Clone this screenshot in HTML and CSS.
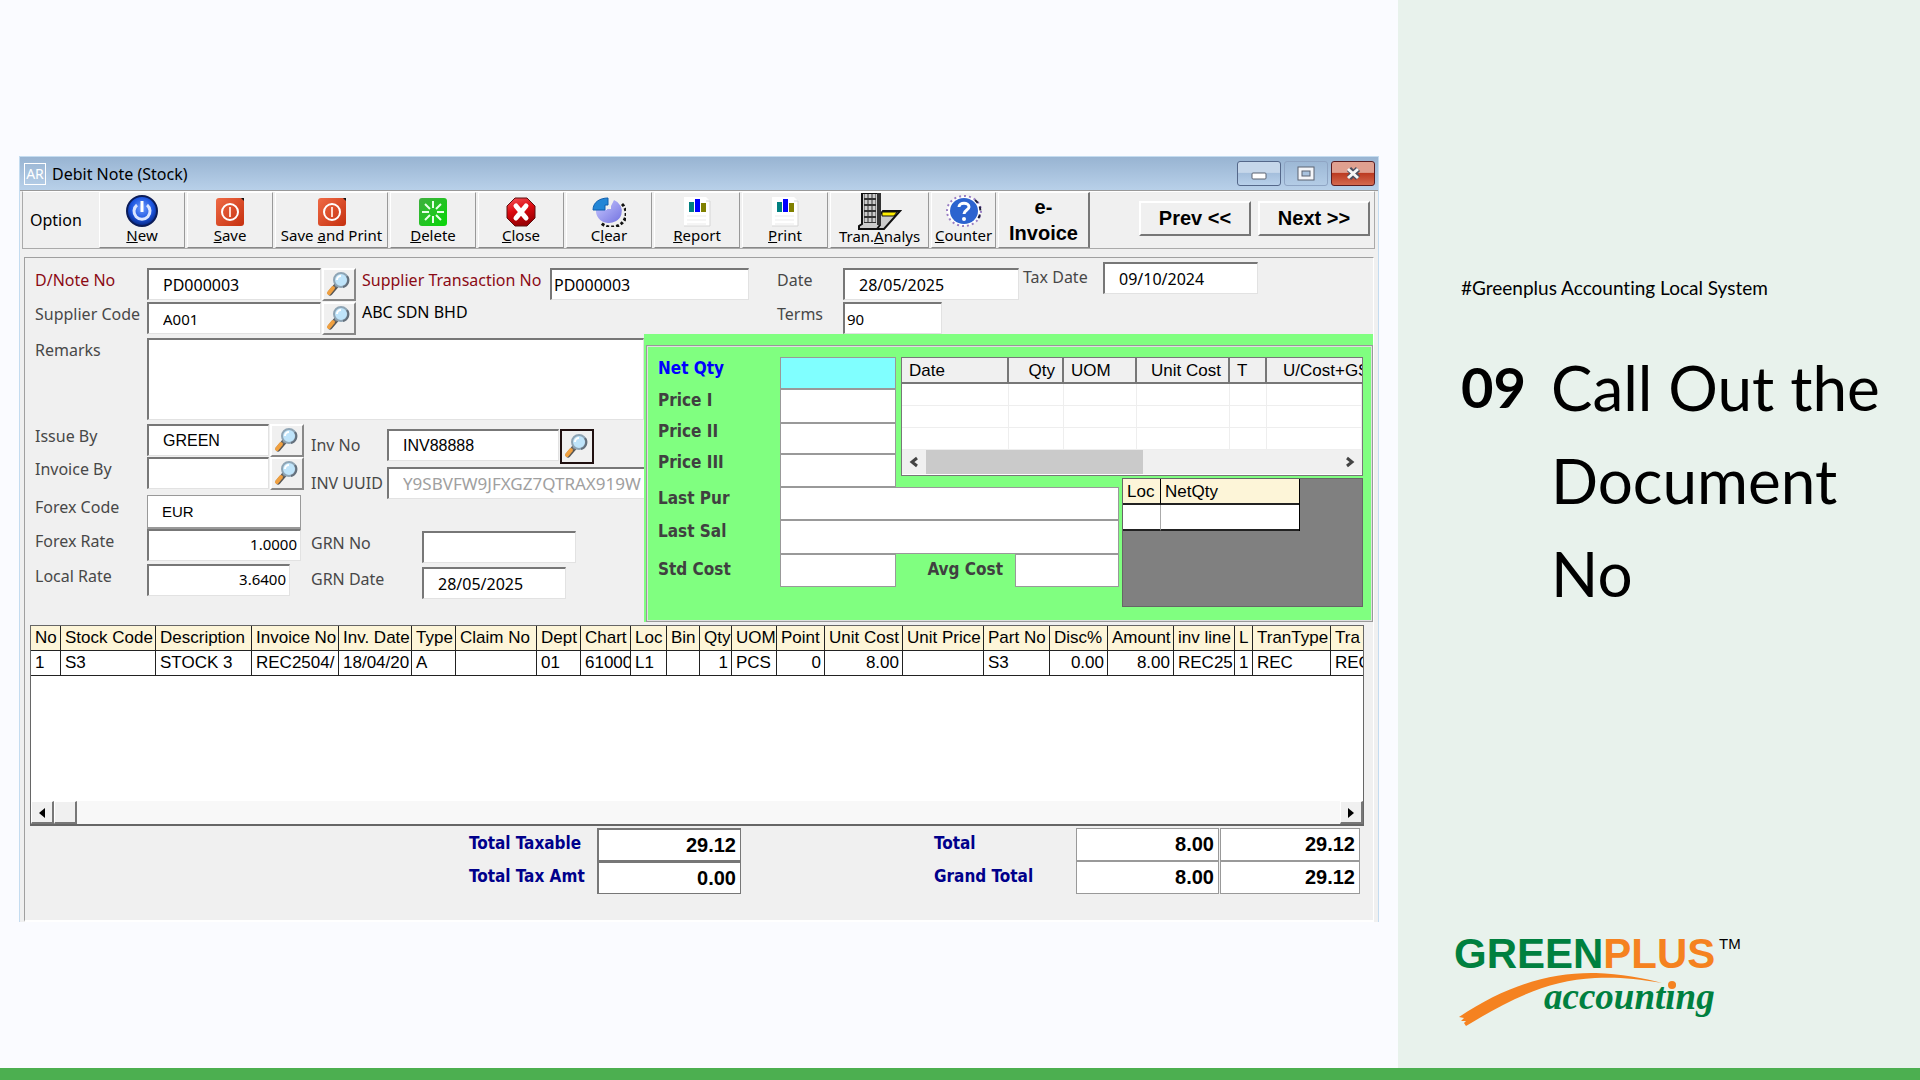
FILE: index.html
```html
<!DOCTYPE html>
<html lang="en">
  <head>
    <meta charset="UTF-8" />
    <meta name="viewport" content="width=device-width, initial-scale=1.0" />
    <title>Call Out the Document No</title>
    <link rel="stylesheet" href="styles.css">
  </head>
  <body>
    <!-- Shared icons -->
    <svg class="defs" width="0" height="0">
      <defs>
        <linearGradient id="redSquare" x1="0" y1="0" x2="1" y2="1">
          <stop offset="0" stop-color="#ef6a45" />
          <stop offset="1" stop-color="#c5300f" />
        </linearGradient>
        <radialGradient id="blueBall" cx="0.5" cy="0.4" r="0.6">
          <stop offset="0" stop-color="#6f9cff" />
          <stop offset="0.6" stop-color="#1d56e0" />
          <stop offset="1" stop-color="#06257f" />
        </radialGradient>
        <linearGradient id="redBall" x1="0" y1="0" x2="0.3" y2="1">
          <stop offset="0" stop-color="#f4555a" />
          <stop offset="0.5" stop-color="#dc0a10" />
          <stop offset="1" stop-color="#9c0004" />
        </linearGradient>
        <linearGradient id="greenSquare" x1="0" y1="0" x2="1" y2="1">
          <stop offset="0" stop-color="#3fae3f" />
          <stop offset="1" stop-color="#08d808" />
        </linearGradient>
        <linearGradient id="pie" x1="0" y1="0" x2="1" y2="1">
          <stop offset="0" stop-color="#c9c9ff" />
          <stop offset="1" stop-color="#7272e0" />
        </linearGradient>
        <symbol id="search" viewBox="0 0 28 28">
          <path d="M6 22 L12 15" stroke="#555" stroke-width="5" stroke-linecap="round" />
          <path d="M5 22 L9 17" stroke="#f0a040" stroke-width="4" stroke-linecap="round" />
          <path d="M11 16 L14 13" stroke="#777" stroke-width="3" />
          <circle cx="17" cy="9" r="7" fill="#bfe4fa" stroke="#8fa5b5" stroke-width="2" />
          <path d="M13 9 a4 4 0 0 1 4 -4" stroke="#fff" stroke-width="2" fill="none" />
          <path d="M23 5 a7 7 0 0 1 -4 11" stroke="#64707c" stroke-width="2" fill="none" />
        </symbol>
        <symbol id="save" viewBox="0 0 30 30">
          <rect x="1" y="1" width="28" height="28" rx="3" fill="url(#redSquare)" />
          <path d="M26 1 h3 v3z" fill="#111" />
          <circle cx="15" cy="15" r="8" fill="none" stroke="#fff" stroke-width="2" />
          <path d="M15 10 v10" stroke="#ffd9cc" stroke-width="2" />
        </symbol>
        <symbol id="report" viewBox="0 0 30 30">
          <path d="M2 0 H24 L28 4 V29 H2z" fill="#fff" />
          <path d="M24 4 h4 v25 H2" fill="none" stroke="#d5d5d5" />
          <path d="M5 19 h19 M5 23 h19 M5 27 h19" stroke="#ebebeb" />
          <rect x="7" y="5" width="5" height="10" fill="#008080" />
          <rect x="13" y="2" width="5" height="13" fill="#0000ff" />
          <rect x="19" y="6" width="5" height="9" fill="#808000" />
        </symbol>
      </defs>
    </svg>

    <div class="slide">
      <main class="stage">
        <section class="window">
          <header class="titlebar">
            <span class="app-icon">AR</span>
            <span class="window-title">Debit Note (Stock)</span>
            <button type="button" class="win-btn" aria-label="Minimize">
              <svg width="44" height="24"><rect x="14" y="11" width="14" height="6" rx="1" fill="#fff" stroke="#5b6270" /></svg>
            </button>
            <button type="button" class="win-btn faded" aria-label="Maximize">
              <svg width="44" height="24"><rect x="15" y="7" width="12" height="9" fill="none" stroke="#5b6270" stroke-width="5" /><rect x="15" y="7" width="12" height="9" fill="none" stroke="#f4f6fa" stroke-width="3" /></svg>
            </button>
            <button type="button" class="win-btn close" aria-label="Close window">
              <svg width="44" height="24"><path d="M17 7 l9 9 M26 7 l-9 9" stroke="#4b4f60" stroke-width="6" /><path d="M16 7 l10 9 M26 7 l-10 9" stroke="#f5f5f5" stroke-width="3" /></svg>
            </button>
          </header>

          <nav class="toolbar">
            <span class="option">Option</span>
            <button type="button" class="tool">
              <svg width="32" height="32" viewBox="0 0 32 32"><circle cx="16" cy="16" r="15" fill="url(#blueBall)" stroke="#0b1c58" stroke-width="2" /><path d="M11 10 a8 8 0 1 0 10 0" fill="none" stroke="#dbe6ff" stroke-width="3" /><path d="M16 6 v11" stroke="#fff" stroke-width="3" /></svg>
              <span><u>N</u>ew</span>
            </button>
            <button type="button" class="tool">
              <svg width="30" height="30"><use href="#save" /></svg>
              <span><u>S</u>ave</span>
            </button>
            <button type="button" class="tool wide">
              <svg width="30" height="30"><use href="#save" /></svg>
              <span>Save <u>a</u>nd Print</span>
            </button>
            <button type="button" class="tool">
              <svg width="30" height="30" viewBox="0 0 30 30"><rect x="1" y="1" width="28" height="28" rx="3" fill="url(#greenSquare)" /><path d="M15 4 v7 M15 19 v7 M4 15 h7 M19 15 h7 M7 7 l5 5 M18 18 l5 5 M23 7 l-5 5 M12 18 l-5 5" stroke="#e8ffe8" stroke-width="2" /></svg>
              <span><u>D</u>elete</span>
            </button>
            <button type="button" class="tool">
              <svg width="30" height="30" viewBox="0 0 30 30"><path d="M9 1 h12 l8 8 v12 l-8 8 H9 l-8 -8 V9z" fill="url(#redBall)" stroke="#5c1010" /><path d="M10 9 l10 12 M20 9 L10 21" stroke="#fff" stroke-width="5" stroke-linecap="round" /></svg>
              <span><u>C</u>lose</span>
            </button>
            <button type="button" class="tool">
              <svg width="34" height="30" viewBox="0 0 34 30"><path d="M30 7 a14 13 0 0 1 -21 19" fill="none" stroke="#111" stroke-width="3" stroke-dasharray="3 2" /><path d="M19 12 V9 L22 3 A13 12 0 1 1 4 13 H15 V12z" fill="url(#pie)" /><path d="M1 13 C1 5 8 1 16 1 V8 H13 V13z" fill="#2386d6" stroke="#0f5fae" /></svg>
              <span>C<u>l</u>ear</span>
            </button>
            <button type="button" class="tool">
              <svg width="30" height="30"><use href="#report" /></svg>
              <span><u>R</u>eport</span>
            </button>
            <button type="button" class="tool">
              <svg width="30" height="30"><use href="#report" /></svg>
              <span><u>P</u>rint</span>
            </button>
            <button type="button" class="tool analys">
              <svg width="44" height="38" viewBox="0 0 44 38"><path d="M25 18 H42 L26 36 H10z" fill="#ccc" stroke="#111" stroke-width="2" /><path d="M24 19 h15 l-3 4 H24z" fill="#ffee00" stroke="#111" /><path d="M4 0 h18 v32 L19 36 H1 v-3 l3 -2z" fill="#ccc" stroke="#111" stroke-width="2" /><path d="M6 1 h12 v29 H6z" fill="#333" /><path d="M8 1 v28 M12 1 v28 M16 1 v28" stroke="#ccc" stroke-width="3" stroke-dasharray="4 2" /><path d="M21 0 v32" stroke="#333" stroke-width="4" /></svg>
              <span>Tran.<u>A</u>nalys</span>
            </button>
            <button type="button" class="tool narrow">
              <svg width="38" height="32" viewBox="0 0 38 32"><ellipse cx="19" cy="16" rx="17" ry="15" fill="#fff" stroke="#9a7fc4" stroke-width="2" stroke-dasharray="2 3" /><path d="M30 5 A17 15 0 0 1 31 26" fill="none" stroke="#1c1c3a" stroke-width="2" stroke-dasharray="4 4" /><ellipse cx="19" cy="16" rx="14" ry="13" fill="#2c63cf" /><path d="M14 12 C14 7 24 7 24 12 C24 15 19 15 19 19" fill="none" stroke="#fff" stroke-width="3" /><circle cx="19" cy="24" r="2" fill="#fff" /></svg>
              <span><u>C</u>ounter</span>
            </button>
            <button type="button" class="tool einvoice">e-<br>Invoice</button>
            <div class="pager">
              <button type="button" class="page-btn">Prev &lt;&lt;</button>
              <button type="button" class="page-btn">Next &gt;&gt;</button>
            </div>
          </nav>

          <form class="panel">
            <div class="head">
              <div class="doc-keys">
                <label for="dnote" class="red">D/Note No</label>
                <input type="text" id="dnote" class="pad" value="PD000003">
                <button type="button" class="find" aria-label="Find debit note"><svg width="28" height="28"><use href="#search" /></svg></button>
                <label for="supplier">Supplier Code</label>
                <input type="text" id="supplier" class="pad small" value="A001">
                <button type="button" class="find" aria-label="Find supplier"><svg width="28" height="28"><use href="#search" /></svg></button>
              </div>
              <div class="doc-supplier">
                <label for="transNo" class="red">Supplier Transaction No</label>
                <input type="text" id="transNo" value="PD000003">
                <span class="supplier-name">ABC SDN BHD</span>
              </div>
              <div class="doc-dates">
                <label for="date">Date</label>
                <input type="text" id="date" class="pad" value="28/05/2025">
                <label for="terms">Terms</label>
                <input type="text" id="terms" class="short small" value="90">
              </div>
              <div class="doc-tax">
                <label for="taxDate">Tax Date</label>
                <input type="text" id="taxDate" class="pad" value="09/10/2024">
              </div>
            </div>

            <div class="body">
              <div class="details">
                <div class="remarks">
                  <label for="remarks">Remarks</label>
                  <textarea id="remarks"></textarea>
                </div>
                <div class="columns">
                  <div class="left-fields">
                    <label for="issueBy">Issue By</label>
                    <input type="text" id="issueBy" class="pad arial" value="GREEN">
                    <button type="button" class="find" aria-label="Find issuer"><svg width="28" height="28"><use href="#search" /></svg></button>
                    <label for="invoiceBy">Invoice By</label>
                    <input type="text" id="invoiceBy">
                    <button type="button" class="find" aria-label="Find invoicer"><svg width="28" height="28"><use href="#search" /></svg></button>
                    <label for="forexCode">Forex Code</label>
                    <input type="text" id="forexCode" class="pad span flat small arial" value="EUR">
                    <label for="forexRate">Forex Rate</label>
                    <input type="text" id="forexRate" class="span num" value="1.0000">
                    <label for="localRate">Local Rate</label>
                    <input type="text" id="localRate" class="span num rate" value="3.6400">
                  </div>
                  <div class="right-fields">
                    <div class="inv-row">
                      <label for="invNo">Inv No</label>
                      <input type="text" id="invNo" class="pad arial" value="INV88888">
                      <button type="button" class="find focused" aria-label="Find invoice"><svg width="28" height="28"><use href="#search" /></svg></button>
                    </div>
                    <div class="inv-row">
                      <label for="invUuid">INV UUID</label>
                      <input type="text" id="invUuid" class="pad uuid" value="Y9SBVFW9JFXGZ7QTRAX919W">
                    </div>
                    <div class="grn-row">
                      <label for="grnNo">GRN No</label>
                      <input type="text" id="grnNo">
                    </div>
                    <div class="grn-row">
                      <label for="grnDate">GRN Date</label>
                      <input type="text" id="grnDate" class="pad grn-date" value="28/05/2025">
                    </div>
                  </div>
                </div>
              </div>

              <div class="stock">
                <div class="stock-box">
                  <label for="netQty" class="blue">Net Qty</label>
                  <input type="text" id="netQty" class="price cyan">
                  <label for="price1">Price I</label>
                  <input type="text" id="price1" class="price">
                  <label for="price2" class="tight">Price II</label>
                  <input type="text" id="price2" class="price">
                  <label for="price3" class="tall tight">Price III</label>
                  <input type="text" id="price3" class="price tall">
                  <label for="lastPur">Last Pur</label>
                  <input type="text" id="lastPur" class="last">
                  <label for="lastSal">Last Sal</label>
                  <input type="text" id="lastSal" class="last">
                  <label for="stdCost" class="cost-label">Std Cost</label>
                  <input type="text" id="stdCost" class="price cost">
                  <label for="avgCost" class="avg-label cost-label">Avg Cost</label>
                  <input type="text" id="avgCost" class="avg cost">

                  <div class="history">
                    <table>
                      <thead>
                        <tr><th>Date</th><th class="r">Qty</th><th>UOM</th><th class="r">Unit Cost</th><th>T</th><th class="r">U/Cost+GST</th></tr>
                      </thead>
                      <tbody>
                        <tr><td></td><td></td><td></td><td></td><td></td><td></td></tr>
                        <tr><td></td><td></td><td></td><td></td><td></td><td></td></tr>
                        <tr><td></td><td></td><td></td><td></td><td></td><td></td></tr>
                      </tbody>
                    </table>
                    <div class="scroll">
                      <button type="button" aria-label="Scroll left"><svg width="10" height="12"><path d="M8 2 L3 6 L8 10" fill="none" stroke="#444" stroke-width="3" /></svg></button>
                      <div class="thumb"></div>
                      <button type="button" aria-label="Scroll right"><svg width="10" height="12"><path d="M2 2 L7 6 L2 10" fill="none" stroke="#444" stroke-width="3" /></svg></button>
                    </div>
                  </div>

                  <div class="locations">
                    <table>
                      <thead><tr><th>Loc</th><th>NetQty</th></tr></thead>
                      <tbody><tr><td></td><td></td></tr></tbody>
                    </table>
                  </div>
                </div>
              </div>
            </div>

            <div class="lines">
              <table>
                <colgroup>
                  <col><col><col><col><col><col><col><col><col><col><col><col>
                  <col><col><col><col><col><col><col><col><col><col><col>
                </colgroup>
                <thead>
                  <tr>
                    <th>No</th><th>Stock Code</th><th>Description</th><th>Invoice No</th><th>Inv. Date</th>
                    <th>Type</th><th>Claim No</th><th>Dept</th><th>Chart</th><th>Loc</th><th>Bin</th><th>Qty</th>
                    <th>UOM</th><th>Point</th><th>Unit Cost</th><th>Unit Price</th><th>Part No</th><th>Disc%</th>
                    <th>Amount</th><th>inv line</th><th>L</th><th>TranType</th><th>Tra</th>
                  </tr>
                </thead>
                <tbody>
                  <tr>
                    <td>1</td><td>S3</td><td>STOCK 3</td><td>REC2504/</td><td>18/04/20</td>
                    <td>A</td><td></td><td>01</td><td>61000</td><td>L1</td><td></td><td class="r">1</td>
                    <td>PCS</td><td class="r">0</td><td class="r">8.00</td><td></td><td>S3</td><td class="r">0.00</td>
                    <td class="r">8.00</td><td>REC25</td><td>1</td><td>REC</td><td>REC</td>
                  </tr>
                </tbody>
              </table>
              <div class="classic-scroll">
                <button type="button" aria-label="Scroll left"><svg width="8" height="12"><path d="M7 1 V11 L1 6z" /></svg></button>
                <div class="classic-thumb"></div>
                <button type="button" class="end" aria-label="Scroll right"><svg width="8" height="12"><path d="M1 1 V11 L7 6z" /></svg></button>
              </div>
            </div>

            <div class="totals">
              <div class="tax-totals">
                <label for="taxable">Total Taxable</label>
                <input type="text" id="taxable" value="29.12">
                <label for="taxAmt">Total Tax Amt</label>
                <input type="text" id="taxAmt" value="0.00">
              </div>
              <div class="grand-totals">
                <label for="total">Total</label>
                <input type="text" id="total" value="8.00">
                <input type="text" aria-label="Total local" value="29.12">
                <label for="grand">Grand Total</label>
                <input type="text" id="grand" value="8.00">
                <input type="text" aria-label="Grand total local" value="29.12">
              </div>
            </div>
          </form>
        </section>
      </main>

      <aside class="caption">
        <p class="tag">#Greenplus Accounting Local System</p>
        <div class="step">
          <span class="step-no">09</span>
          <h1>Call Out the Document No</h1>
        </div>
        <svg class="logo" width="300" height="100" viewBox="0 0 300 100">
          <text x="4" y="38" class="logo-name"><tspan fill="#00803f">GREEN</tspan><tspan fill="#f58220">PLUS</tspan></text>
          <text x="269" y="19" class="logo-tm">TM</text>
          <path d="M9 87 C55 56 100 42 146 43 C170 44 195 48 212 53 C185 48 165 47 145 48 C100 50 62 68 16 96 L14 93 L16 91 L11 91 L14 88z" fill="#f58220" />
          <text x="94" y="79" class="logo-sub">accounting</text>
          <circle cx="222" cy="55" r="4" fill="#f58220" />
        </svg>
      </aside>
    </div>
    <footer class="strip"></footer>
  </body>
</html>
```
FILE: styles.css
```css
* {
  box-sizing: border-box;
}

body {
  margin: 0;
  min-height: 100vh;
  display: flex;
  flex-direction: column;
  background: #fafbff;
  font-family: "Noto Sans", sans-serif;
  font-size: 16px;
  color: #000;
}

.defs {
  position: absolute;
}

.slide {
  flex: 1;
  display: grid;
  grid-template-columns: minmax(0, 1fr) 522px;
}

.strip {
  height: 12px;
  background: #4caf50;
}

.stage {
  padding: 156px 19px 0;
}

button,
input,
textarea {
  font-family: inherit;
  font-size: inherit;
  color: inherit;
  margin: 0;
  padding: 0;
  border-radius: 0;
}

/* Window frame */
.window {
  background: #f0f0f0;
  border: 1px solid #c4dcf0;
  border-bottom: none;
}

.titlebar {
  height: 34px;
  display: flex;
  align-items: center;
  gap: 3px;
  padding: 0 3px 0 4px;
  background: linear-gradient(#98b4d2, #b8d0e9);
  border-bottom: 1px solid #999;
}

.app-icon {
  width: 22px;
  height: 22px;
  border: 1px solid #fff;
  color: #fff;
  font-size: 14px;
  line-height: 20px;
  text-align: center;
}

.window-title {
  flex: 1;
  padding-left: 3px;
}

.win-btn {
  width: 44px;
  height: 25px;
  border: 1px solid #55688a;
  border-radius: 3px;
  background: linear-gradient(#c6d7ea 45%, #a5bfdc 50%, #b8d0ea);
}

.win-btn svg {
  display: block;
}

.win-btn.faded {
  border-color: #8fa5c4;
  background: none;
}

.win-btn.close {
  border-color: #5a1c20;
  background: linear-gradient(#e0a090 45%, #bc3b22 50%, #d4694e);
}

/* Toolbar */
.toolbar {
  height: 58px;
  margin: 0 3px 0 2px;
  display: flex;
  gap: 2px;
  border: 1px solid #aaa;
  border-top-color: #fff;
}

.option {
  width: 74px;
  padding-left: 7px;
  line-height: 56px;
}

.tool {
  width: 86px;
  display: flex;
  flex-direction: column;
  align-items: center;
  justify-content: flex-end;
  border: 1px solid;
  border-color: #fff #999 #888 #fff;
  background: #f0f0f0;
  font-size: 15px;
  line-height: 18px;
  white-space: nowrap;
}

.tool svg {
  flex: none;
  margin-bottom: -3px;
}

.tool span {
  height: 23px;
  line-height: 22px;
}

.tool.wide {
  width: 113px;
}

.tool.analys {
  width: 99px;
}

.tool.analys svg {
  margin-bottom: -6px;
}

.tool.narrow {
  width: 65px;
}

.tool.einvoice {
  width: 92px;
  display: block;
  border-right: 2px solid #777;
  font: bold 20px/26px "Liberation Sans", sans-serif;
}

.pager {
  margin-left: auto;
  padding: 9px 4px 0 0;
  display: flex;
  gap: 7px;
}

.page-btn {
  width: 112px;
  height: 35px;
  border: 2px solid;
  border-color: #fff #777 #777 #fff;
  background: #f0f0f0;
  font: bold 20px "Liberation Sans", sans-serif;
}

/* Form controls */
label {
  color: #484848;
  line-height: 24px;
  white-space: nowrap;
}

label.red {
  color: #8b0a14;
}

input,
textarea {
  display: block;
  width: 100%;
  height: 32px;
  padding-left: 2px;
  border: 1px solid #e2e2e2;
  border-top: 2px solid #777;
  border-left: 2px solid #777;
  background: #fff;
}

input.pad {
  padding-left: 14px;
}

input.small {
  font-size: 15px;
}

input.arial {
  font-family: "Liberation Sans", sans-serif;
}

.find {
  width: 34px;
  height: 33px;
  border: 2px solid;
  border-color: #fff #888 #888 #fff;
  background: #f0f0f0;
}

.find svg {
  display: block;
}

.find.focused {
  height: 35px;
  border-color: #201010;
}

.panel {
  margin: 8px 4px 5px 4px;
  padding-bottom: 26px;
  border: 1px solid #a0a0a0;
  border-right-color: #fff;
  border-bottom: 2px solid #fff;
}

/* Document header */
.head {
  height: 76px;
  padding: 10px 0 0 10px;
  display: flex;
  align-items: flex-start;
}

.doc-keys {
  display: grid;
  grid-template-columns: 111px 174px 34px;
  column-gap: 1px;
  row-gap: 1px;
}

.doc-supplier {
  margin-left: 6px;
  display: grid;
  grid-template-columns: 188px 199px;
  grid-auto-rows: 32px;
}

.supplier-name {
  line-height: 24px;
}

.doc-dates {
  margin-left: 28px;
  display: grid;
  grid-template-columns: 66px 176px;
  row-gap: 2px;
}

.short {
  width: 99px;
}

.doc-tax {
  margin: -6px 0 0 4px;
  display: grid;
  grid-template-columns: 80px 155px;
}

.doc-tax label {
  line-height: 30px;
}

.body {
  display: grid;
  grid-template-columns: 619px minmax(0, 1fr);
}

.details {
  padding: 4px 0 0 10px;
  overflow: hidden;
}

.remarks {
  display: grid;
  grid-template-columns: 112px 1fr;
  margin-bottom: 4px;
}

.remarks textarea {
  height: 82px;
  resize: none;
}

.columns {
  display: flex;
  gap: 7px;
}

.left-fields {
  display: grid;
  grid-template-columns: 111px 122px 34px;
  grid-template-rows: 33px 38px 34px 35px 33px;
  column-gap: 1px;
}

.left-fields .span {
  grid-column: span 2;
  width: 154px;
}

.left-fields .flat {
  height: 34px;
  border: 1px solid #999;
  border-bottom-width: 2px;
}

.left-fields .num {
  padding: 0 3px 4px 0;
  text-align: right;
  font-size: 15px;
}

.left-fields .rate {
  width: 143px;
}

.right-fields {
  flex: 1;
  padding-top: 5px;
  display: grid;
  grid-template-rows: 38px 64px 36px 33px;
}

.inv-row {
  display: grid;
  grid-template-columns: 75px 172px 35px;
  column-gap: 1px;
}

.inv-row label {
  line-height: 32px;
}

.inv-row .uuid {
  width: 290px;
  color: #a0a0a0;
  font-size: 17px;
}

.grn-row {
  display: grid;
  grid-template-columns: 111px 154px;
}

.grn-date {
  width: 144px;
}

/* Stock information */
.stock {
  padding: 11px 0 0 2px;
  background: #80ff80;
}

.stock-box {
  height: 277px;
  padding: 11px 9px 0 11px;
  border: 1px solid #999;
  outline: 1px solid #e0e0e0;
  outline-offset: -2px;
  display: grid;
  grid-template-columns: 122px 116px 5px 114px 104px 3px minmax(0, 1fr);
  grid-template-rows: 32px 34px 31px 24px 9px 33px 34px 53px;
}

.stock-box label {
  grid-column: 1;
  color: #404040;
  line-height: 22px;
}

.stock-box label,
.totals label {
  font-family: "DejaVu Sans Condensed", "DejaVu Sans", sans-serif;
  font-size: 17px;
  font-weight: bold;
}

.stock-box label.blue {
  color: #0000ff;
}

.stock-box label.tight {
  line-height: 16px;
}

.stock-box input {
  height: 100%;
  border: 1px solid #999;
}

.stock-box .price {
  grid-column: 2;
}

.stock-box .cyan {
  background: #80ffff;
}

.stock-box .tall {
  grid-row: 4 / 6;
}

.stock-box .last {
  grid-column: 2 / 6;
}

.stock-box .cost {
  height: 33px;
}

.stock-box .cost-label {
  line-height: 30px;
}

.stock-box .avg-label {
  grid-column: 4;
  grid-row: 8;
  padding-right: 12px;
  text-align: right;
}

.stock-box .avg {
  grid-column: 5;
  grid-row: 8;
}

table {
  border-collapse: separate;
  border-spacing: 0;
  table-layout: fixed;
  font-family: "Liberation Sans", sans-serif;
  font-size: 17px;
  line-height: 20px;
}

th,
td {
  padding: 0;
  overflow: hidden;
  white-space: nowrap;
  text-align: left;
  font-weight: normal;
}

.r {
  text-align: right;
}

.history {
  grid-column: 4 / 8;
  grid-row: 1 / 5;
  height: 119px;
  border: 1px solid #777;
  background: #fff;
}

.history table {
  width: 100%;
}

.history th {
  width: 93px;
  height: 26px;
  padding: 2px 7px 0;
  border-right: 2px solid #777;
  border-bottom: 2px solid #777;
  background: #f0f0f0;
}

.history th:nth-child(1) {
  width: 107px;
}

.history th:nth-child(2) {
  width: 55px;
}

.history th:nth-child(3) {
  width: 73px;
}

.history th:nth-child(5) {
  width: 37px;
}

.history th:nth-child(6) {
  width: auto;
  padding: 2px 0 0 16px;
  border-right: none;
  text-align: left;
}

.history td {
  height: 22px;
  border-right: 1px solid #eee;
  border-bottom: 1px solid #eee;
}

.scroll {
  height: 24px;
  display: flex;
  background: #f0f0f0;
}

.scroll button {
  width: 24px;
  border: none;
  background: none;
}

.scroll button:last-child {
  margin-left: auto;
}

.thumb {
  width: 217px;
  background: #cacaca;
}

.locations {
  grid-column: 7;
  grid-row: 5 / 9;
  height: 129px;
  border: 1px solid #666;
  background: #808080;
}

.locations table {
  width: 177px;
  border-right: 1px solid #000;
  background: #fff;
}

.locations th,
.locations td {
  height: 26px;
  padding-left: 4px;
  border-bottom: 2px solid #222;
}

.locations th {
  padding-top: 2px;
  background: #fdf5d8;
}

.locations th:first-child {
  width: 38px;
  border-right: 1px solid #000;
}

.locations td:first-child {
  border-right: 1px solid #aaa;
}

/* Document lines */
.lines {
  height: 201px;
  margin: 3px 9px 0 5px;
  display: flex;
  flex-direction: column;
  justify-content: space-between;
  border: 1px solid #666;
  border-bottom-width: 2px;
  background: #fff;
}

.lines table {
  width: 100%;
}

.lines th,
.lines td {
  height: 25px;
  padding-left: 4px;
  border-right: 1px solid #222;
  border-bottom: 1px solid #222;
}

.lines th:last-child,
.lines td:last-child {
  border-right: none;
}

.lines th {
  background: #fdf5d8;
}

.lines .r {
  padding-right: 3px;
}

.lines col:nth-child(1) { width: 30px; }
.lines col:nth-child(2) { width: 95px; }
.lines col:nth-child(3) { width: 96px; }
.lines col:nth-child(4) { width: 87px; }
.lines col:nth-child(5) { width: 73px; }
.lines col:nth-child(6) { width: 44px; }
.lines col:nth-child(7) { width: 81px; }
.lines col:nth-child(8) { width: 44px; }
.lines col:nth-child(9) { width: 50px; }
.lines col:nth-child(10) { width: 36px; }
.lines col:nth-child(11) { width: 33px; }
.lines col:nth-child(12) { width: 32px; }
.lines col:nth-child(13) { width: 45px; }
.lines col:nth-child(14) { width: 48px; }
.lines col:nth-child(15) { width: 78px; }
.lines col:nth-child(16) { width: 81px; }
.lines col:nth-child(17) { width: 66px; }
.lines col:nth-child(18) { width: 58px; }
.lines col:nth-child(19) { width: 66px; }
.lines col:nth-child(20) { width: 61px; }
.lines col:nth-child(21) { width: 18px; }
.lines col:nth-child(22) { width: 78px; }

.classic-scroll {
  height: 23px;
  display: flex;
  background: #f8f8f8;
}

.classic-scroll button,
.classic-thumb {
  width: 23px;
  border: 1px solid;
  border-color: #fff #777 #777 #fff;
  border-right-width: 2px;
  border-bottom-width: 2px;
  background: #f0f0f0;
}

.classic-scroll .end {
  margin-left: auto;
}

/* Totals */
.totals {
  padding: 2px 13px 0 444px;
  display: flex;
  justify-content: space-between;
}

.totals label {
  color: #00008b;
  line-height: 30px;
}

.totals input {
  height: 33px;
  padding-right: 4px;
  border: 1px solid #999;
  text-align: right;
  font: bold 20px "Liberation Sans", sans-serif;
}

.tax-totals {
  display: grid;
  grid-template-columns: 128px 144px;
}

.tax-totals input {
  border-width: 2px 1px 1px 2px;
  border-color: #777;
}

.grand-totals {
  display: grid;
  grid-template-columns: 141px 143px 140px;
  column-gap: 1px;
}

/* Caption */
.caption {
  padding: 275px 20px 38px 63px;
  display: flex;
  flex-direction: column;
  background: #e8f2ec;
  font-family: Lato, sans-serif;
}

.tag {
  margin: 0;
  font-size: 19px;
  line-height: 26px;
  font-variant-ligatures: none;
}

.step {
  margin-top: 40px;
  display: grid;
  grid-template-columns: 90px 1fr;
}

.step-no {
  font-size: 56px;
  font-weight: bold;
  line-height: 91px;
}

.step h1 {
  margin: 0;
  font-size: 62px;
  font-weight: normal;
  line-height: 93px;
}

.logo {
  margin: auto 0 0 -11px;
}

.logo-name {
  font: bold 42px "Liberation Sans", sans-serif;
}

.logo-tm {
  font: 15px "Liberation Sans", sans-serif;
}

.logo-sub {
  font: italic bold 37px "Liberation Serif", serif;
  fill: #00803f;
}
```
